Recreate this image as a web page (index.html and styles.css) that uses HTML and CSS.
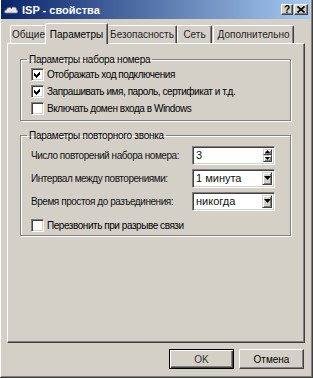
FILE: index.html
```html
<!DOCTYPE html>
<html lang="ru">
  <head>
    <meta charset="utf-8" />
    <title>ISP - свойства</title>
    <link rel="stylesheet" href="styles.css">
  </head>

  <body>
    <div class="window">
      <div class="titlebar">
        <svg class="app-icon" width="14" height="12" viewBox="0 0 14 12">
          <path d="M2 9 C0 9 0 6 2.5 6 C2.5 3.5 6 2.5 7.5 4.5 C9 2 13 3 12.5 6 C14.5 6.5 14 9 12 9 Z" fill="#e8e8e8" stroke="#7a7a7a" stroke-width="0.8" />
        </svg>
        <span class="title">ISP - свойства</span>
        <div class="caption-buttons">
          <span class="caption-btn help">?</span>
          <span class="caption-btn close">
            <svg width="8" height="7" viewBox="0 0 8 7">
              <path d="M0.5 0.5 L7.5 6.5 M7.5 0.5 L0.5 6.5" stroke="#000" stroke-width="1.6" />
            </svg>
          </span>
        </div>
      </div>

      <div class="client">
        <div class="tabs">
          <div class="tab tab-general">Общие</div>
          <div class="tab tab-options active">Параметры</div>
          <div class="tab tab-security">Безопасность</div>
          <div class="tab tab-net">Сеть</div>
          <div class="tab tab-advanced">Дополнительно</div>
        </div>

        <div class="tab-panel">
          <fieldset class="group group-dial">
            <legend>Параметры набора номера</legend>
            <div class="check-row">
              <span class="checkbox">
                <svg width="9" height="9" viewBox="0 0 9 9"><path d="M1 3 L3 5 L7 1 L7 4 L3 8 L1 6 Z" fill="#000" /></svg>
              </span>
              <span>Отображать ход подключения</span>
            </div>
            <div class="check-row">
              <span class="checkbox">
                <svg width="9" height="9" viewBox="0 0 9 9"><path d="M1 3 L3 5 L7 1 L7 4 L3 8 L1 6 Z" fill="#000" /></svg>
              </span>
              <span>Запрашивать имя, пароль, сертификат и т.д.</span>
            </div>
            <div class="check-row">
              <span class="checkbox"></span>
              <span>Включать домен входа в Windows</span>
            </div>
          </fieldset>

          <fieldset class="group group-redial">
            <legend>Параметры повторного звонка</legend>
            <div class="field-row">
              <span class="field-label">Число повторений набора номера:</span>
              <div class="field spin">
                <span class="value">3</span>
                <div class="spin-buttons">
                  <span class="spin-btn"><svg width="5" height="3" viewBox="0 0 5 3"><path d="M2.5 0 L5 3 L0 3 Z" fill="#000" /></svg></span>
                  <span class="spin-btn"><svg width="5" height="3" viewBox="0 0 5 3"><path d="M0 0 L5 0 L2.5 3 Z" fill="#000" /></svg></span>
                </div>
              </div>
            </div>
            <div class="field-row">
              <span class="field-label">Интервал между повторениями:</span>
              <div class="field combo">
                <span class="value">1 минута</span>
                <span class="drop-btn"><svg width="7" height="4" viewBox="0 0 7 4"><path d="M0 0 L7 0 L3.5 4 Z" fill="#000" /></svg></span>
              </div>
            </div>
            <div class="field-row">
              <span class="field-label">Время простоя до разъединения:</span>
              <div class="field combo">
                <span class="value">никогда</span>
                <span class="drop-btn"><svg width="7" height="4" viewBox="0 0 7 4"><path d="M0 0 L7 0 L3.5 4 Z" fill="#000" /></svg></span>
              </div>
            </div>
            <div class="check-row last">
              <span class="checkbox"></span>
              <span>Перезвонить при разрыве связи</span>
            </div>
          </fieldset>
        </div>

        <div class="dialog-buttons">
          <button class="btn default">OK</button>
          <button class="btn">Отмена</button>
        </div>
      </div>
    </div>
  </body>
</html>
```

FILE: styles.css
```css
/* Classic dialog, grey face */

html,
body {
  margin: 0;
  background: #d4d0c8;
  font-family: "Liberation Sans", Arial, sans-serif;
  font-size: 10px;
  color: #000;
}

.window {
  width: 313px;
  height: 378px;
  box-sizing: border-box;
  background: #d4d0c8;
  border-right: 1px solid #404040;
  border-bottom: 1px solid #404040;
  box-shadow: inset 1px 0 #fff, inset -1px -1px #808080;
  padding: 0 2px 2px 1px;
}

/* Title bar */

.titlebar {
  height: 19px;
  display: flex;
  align-items: center;
  padding: 0 2px 0 3px;
  background: linear-gradient(to right, #0a246a, #a6caf0);
}

.app-icon {
  margin-right: 4px;
}

.title {
  flex: 1;
  color: #fff;
  font-weight: bold;
  font-size: 11px;
}

.caption-buttons {
  display: flex;
  gap: 1px;
}

.caption-btn {
  width: 12px;
  height: 11px;
  box-sizing: border-box;
  display: flex;
  align-items: center;
  justify-content: center;
  background: #d4d0c8;
  border: 1px solid;
  border-color: #fff #404040 #404040 #fff;
  box-shadow: inset -1px -1px #808080;
  font-weight: bold;
  font-size: 10px;
  line-height: 1;
}

.caption-btn.close {
  width: 14px;
}

/* Tabs */

.client {
  padding: 4px 5px 0 6px;
}

.tabs {
  display: flex;
  align-items: flex-end;
  height: 20px;
  padding-left: 3px;
}

.tab {
  height: 18px;
  box-sizing: border-box;
  padding: 0 4px;
  display: flex;
  align-items: center;
  justify-content: center;
  white-space: nowrap;
  border: 1px solid;
  border-bottom: none;
  border-color: #fff #404040 transparent #fff;
  border-radius: 2px 2px 0 0;
  box-shadow: inset -1px 0 #808080;
  color: #222;
}

.tab-general { width: 37px; }
.tab-security { width: 70px; }
.tab-net { width: 35px; }
.tab-advanced { width: 81px; margin-left: 1px; }

.tab.active {
  width: 63px;
  height: 21px;
  margin: 0 -1px -1px -2px;
  position: relative;
  z-index: 1;
  background: #d4d0c8;
  color: #000;
}

.tab-panel {
  height: 300px;
  box-sizing: border-box;
  border: 1px solid;
  border-color: #fff #404040 #404040 #fff;
  box-shadow: inset -1px -1px #808080;
  padding: 9px 13px 0 12px;
  letter-spacing: -0.45px;
}

/* Group boxes */

.group {
  margin: 0;
  padding: 0 15px 4px 10px;
  border: 1px solid #808080;
  box-shadow: 1px 1px 0 #fff, inset 1px 1px 0 #fff;
  display: flex;
  flex-direction: column;
  gap: 1px;
}

.group legend {
  padding: 0 2px;
  margin-left: -4px;
  line-height: 13px;
  letter-spacing: -0.25px;
}

.group-redial {
  margin-top: 8px;
  padding-top: 3px;
  padding-bottom: 2px;
  gap: 3px;
}

.check-row {
  height: 16px;
  display: flex;
  align-items: center;
  gap: 3px;
  white-space: nowrap;
}

.check-row.last {
  margin-top: 3px;
}

.checkbox {
  width: 13px;
  height: 13px;
  box-sizing: border-box;
  display: flex;
  align-items: center;
  justify-content: center;
  background: #fff;
  border: 1px solid;
  border-color: #808080 #fff #fff #808080;
  box-shadow: inset 1px 1px #404040, inset -1px -1px #d4d0c8;
}

.checkbox svg {
  shape-rendering: crispEdges;
}

.field-row {
  height: 20px;
  display: flex;
  align-items: center;
  justify-content: space-between;
  white-space: nowrap;
  color: #111;
}

.field {
  width: 83px;
  height: 19px;
  flex: none;
  box-sizing: border-box;
  display: flex;
  align-items: center;
  padding: 2px 2px 2px 3px;
  background: #fff;
  border: 1px solid;
  border-color: #808080 #fff #fff #808080;
  box-shadow: inset 1px 1px #404040, inset -1px -1px #d4d0c8;
  letter-spacing: 0;
}

.field .value {
  flex: 1;
  font-size: 11px;
}

.spin-buttons {
  display: flex;
  flex-direction: column;
  height: 100%;
}

.spin-btn,
.drop-btn {
  width: 9px;
  flex: 1;
  box-sizing: border-box;
  display: flex;
  align-items: center;
  justify-content: center;
  background: #d4d0c8;
  border: 1px solid;
  border-color: #d4d0c8 #404040 #404040 #d4d0c8;
  box-shadow: inset 1px 1px #fff, inset -1px -1px #808080;
}

.drop-btn {
  flex: none;
  width: 10px;
  height: 100%;
}

/* Dialog buttons */

.dialog-buttons {
  display: flex;
  justify-content: flex-end;
  gap: 5px;
  margin-top: 6px;
  padding-right: 1px;
}

.btn {
  width: 65px;
  height: 20px;
  box-sizing: border-box;
  margin: 0;
  padding: 0;
  font: inherit;
  color: #000;
  background: #d4d0c8;
  border: 1px solid;
  border-color: #fff #404040 #404040 #fff;
  box-shadow: inset -1px -1px #808080;
}

.btn.default {
  border-color: #000;
  box-shadow: inset 1px 1px #fff, inset -1px -1px #404040, inset -2px -2px #808080;
  color: #333;
}
```
